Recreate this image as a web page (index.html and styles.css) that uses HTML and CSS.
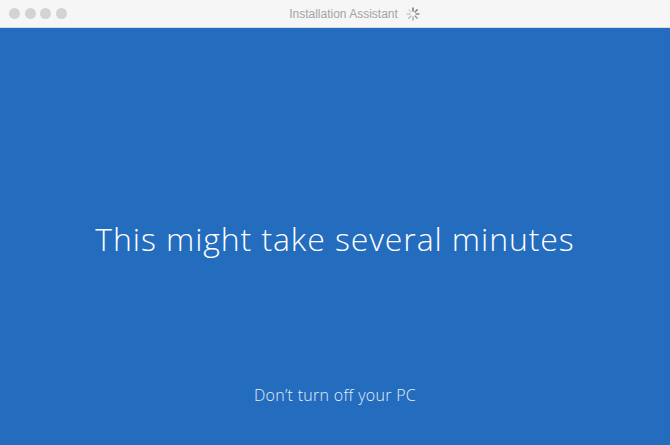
FILE: index.html
```html
<!DOCTYPE html>
<html lang="en">
<head>
    <meta charset="UTF-8">
    <title>Installation Assistant</title>
    <link rel="stylesheet" href="styles.css">
</head>
<body>
    <div class="titlebar">
        <div class="lights">
            <span class="light"></span>
            <span class="light"></span>
            <span class="light"></span>
            <span class="light"></span>
        </div>
        <div class="title">
            Installation Assistant
            <svg class="spinner" width="14" height="14" viewBox="0 0 14 14">
                <g stroke-width="1.4" stroke-linecap="round">
                    <line x1="7" y1="1" x2="7" y2="4" stroke="#6c6c6c"/>
                    <line x1="11.2" y1="2.8" x2="9.1" y2="4.9" stroke="#7a7a7a"/>
                    <line x1="13" y1="7" x2="10" y2="7" stroke="#888"/>
                    <line x1="11.2" y1="11.2" x2="9.1" y2="9.1" stroke="#999"/>
                    <line x1="7" y1="13" x2="7" y2="10" stroke="#aaa"/>
                    <line x1="2.8" y1="11.2" x2="4.9" y2="9.1" stroke="#bbb"/>
                    <line x1="1" y1="7" x2="4" y2="7" stroke="#c8c8c8"/>
                    <line x1="2.8" y1="2.8" x2="4.9" y2="4.9" stroke="#d4d4d4"/>
                </g>
            </svg>
        </div>
    </div>

    <div class="screen">
        <div class="message">This might take several minutes</div>
        <div class="note">Don&rsquo;t turn off your PC</div>
    </div>
</body>
</html>
```

FILE: styles.css
```css
html, body {
    margin: 0;
    padding: 0;
    height: 100%;
}

body {
    display: flex;
    flex-direction: column;
    font-family: 'Open Sans', sans-serif;
    background: #236cbe;
}

.titlebar {
    height: 27px;
    background: #f6f6f6;
    border-bottom: 1px solid #dcdcdc;
    display: flex;
    align-items: center;
    position: relative;
}

.lights {
    display: flex;
    gap: 4.5px;
    padding-left: 9px;
}

.light {
    width: 11px;
    height: 11px;
    border-radius: 50%;
    background: #d3d3d3;
}

.title {
    position: absolute;
    left: 0;
    right: 0;
    top: 0;
    height: 27px;
    display: flex;
    justify-content: center;
    align-items: center;
    gap: 8px;
    padding-left: 39px;
    font-family: 'Liberation Sans', Arial, sans-serif;
    font-size: 12px;
    color: #a3a3a3;
}

.screen {
    flex: 1;
    display: flex;
    flex-direction: column;
    align-items: center;
    color: #fff;
}

.message {
    margin-top: 189px;
    font-size: 32px;
    font-weight: 300;
    letter-spacing: 0.9px;
}

.note {
    margin-top: auto;
    margin-bottom: 39px;
    font-size: 16px;
    font-weight: 300;
    letter-spacing: 0.3px;
    color: #e6eef8;
}
```
